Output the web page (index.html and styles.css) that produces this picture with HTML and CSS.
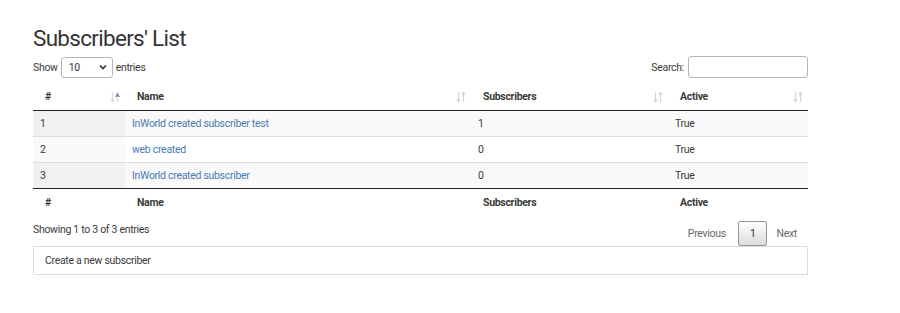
FILE: index.html
```html
<!DOCTYPE html>
<html>
<head>
<meta charset="utf-8">
<link rel="stylesheet" href="styles.css">
</head>
<body>
<div class="page">
  <h2 class="title">Subscribers' List</h2>
  <div class="controls">
    <label class="length">Show
      <span class="select"><span>10</span>
        <svg width="8" height="6" viewBox="0 0 8 6"><path d="M1 1.5 L4 4.5 L7 1.5" fill="none" stroke="#333" stroke-width="1.6"/></svg>
      </span>
      entries</label>
    <label class="search">Search: <span class="input"></span></label>
  </div>
  <table class="grid">
    <colgroup><col class="c1"><col class="c2"><col class="c3"><col class="c4"></colgroup>
    <thead>
      <tr>
        <th><span>#</span>
          <svg class="sort" width="10" height="12" viewBox="0 0 10 12"><path d="M2.5 1 V10.5 M0.8 8.5 L2.5 10.5 L4.2 8.5" fill="none" stroke="#d9d9d9" stroke-width="1.2"/><path d="M5 6 L7.5 1.2 L10 6 Z" fill="#8e86c6"/><path d="M7.5 5.5 V11" stroke="#d9d9d9" stroke-width="1.2"/></svg>
        </th>
        <th><span>Name</span>
          <svg class="sort" width="10" height="12" viewBox="0 0 10 12"><path d="M2.5 1 V10.5 M0.8 8.5 L2.5 10.5 L4.2 8.5 M7.5 11 V1.5 M5.8 3.5 L7.5 1.5 L9.2 3.5" fill="none" stroke="#d4d4d4" stroke-width="1.2"/></svg>
        </th>
        <th><span>Subscribers</span>
          <svg class="sort" width="10" height="12" viewBox="0 0 10 12"><path d="M2.5 1 V10.5 M0.8 8.5 L2.5 10.5 L4.2 8.5 M7.5 11 V1.5 M5.8 3.5 L7.5 1.5 L9.2 3.5" fill="none" stroke="#d4d4d4" stroke-width="1.2"/></svg>
        </th>
        <th><span>Active</span>
          <svg class="sort" width="10" height="12" viewBox="0 0 10 12"><path d="M2.5 1 V10.5 M0.8 8.5 L2.5 10.5 L4.2 8.5 M7.5 11 V1.5 M5.8 3.5 L7.5 1.5 L9.2 3.5" fill="none" stroke="#d4d4d4" stroke-width="1.2"/></svg>
        </th>
      </tr>
    </thead>
    <tbody>
      <tr class="odd"><td class="sorted">1</td><td><a href="#">InWorld created subscriber test</a></td><td>1</td><td>True</td></tr>
      <tr class="even"><td class="sorted">2</td><td><a href="#">web created</a></td><td>0</td><td>True</td></tr>
      <tr class="odd"><td class="sorted">3</td><td><a href="#">InWorld created subscriber</a></td><td>0</td><td>True</td></tr>
    </tbody>
    <tfoot>
      <tr><th>#</th><th>Name</th><th>Subscribers</th><th>Active</th></tr>
    </tfoot>
  </table>
  <div class="info-row">
    <div class="info">Showing 1 to 3 of 3 entries</div>
    <div class="pager">
      <span class="pbtn prev disabled">Previous</span>
      <span class="pbtn current">1</span>
      <span class="pbtn next disabled">Next</span>
    </div>
  </div>
  <div class="create">Create a new subscriber</div>
</div>
</body>
</html>
```
FILE: styles.css
```css
* { box-sizing: border-box; }
body {
  margin: 0;
  font-family: Roboto, "Liberation Sans", sans-serif;
  font-size: 10.5px;
  letter-spacing: -0.3px;
  color: #3a3a3a;
  background: #fff;
}
.page {
  width: 775px;
  margin-left: 33px;
  padding-top: 23px;
}
.title {
  margin: 0;
  font-size: 22.5px;
  letter-spacing: -0.7px;
  font-weight: 400;
  line-height: 30px;
  color: #333;
}
.controls {
  display: flex;
  justify-content: space-between;
  align-items: center;
  margin-top: 3px;
  height: 22px;
}
.length, .search {
  display: flex;
  align-items: center;
  gap: 3px;
}
.select {
  width: 52px;
  height: 21px;
  border: 1px solid #b5b5b5;
  border-radius: 3px;
  display: flex;
  align-items: center;
  justify-content: space-between;
  padding: 0 5px 0 7px;
}
.input {
  display: block;
  width: 120px;
  height: 22px;
  border: 1px solid #b5b5b5;
  border-radius: 3px;
  margin-left: 1px;
}
.grid {
  margin-top: 4px;
  width: 775px;
  border-collapse: collapse;
  table-layout: fixed;
}
.c1 { width: 92px; }
.c2 { width: 346px; }
.c3 { width: 197px; }
.c4 { width: 140px; }
.grid thead th {
  height: 28px;
  padding: 1px 0 0 12px;
  text-align: left;
  font-weight: 700;
  border-bottom: 1px solid #222;
  position: relative;
}
.sort {
  position: absolute;
  right: 5px;
  top: 9px;
}
.grid td {
  height: 26px;
  padding: 0 0 0 7px;
  border-top: 1px solid #ddd;
}
.grid tbody tr:first-child td { border-top: none; }
.odd td { background: #f9f9f9; }
.odd td.sorted { background: #f1f1f1; }
.even td { background: #fff; }
.even td.sorted { background: #fafafa; }
.grid a {
  color: #4a7bb0;
  text-decoration: none;
}
.grid tfoot th {
  height: 27px;
  padding: 1px 0 0 12px;
  text-align: left;
  font-weight: 700;
  border-top: 1px solid #222;
}
.info-row {
  display: flex;
  justify-content: space-between;
  align-items: flex-start;
  margin-top: 6px;
  height: 24px;
}
.info {
  line-height: 13px;
  margin-top: 2px;
}
.pager {
  display: flex;
  align-items: center;
}
.pbtn {
  line-height: 13px;
  padding: 5px 11px;
  color: #666;
  border: 1px solid transparent;
  border-radius: 2px;
}
.pbtn.next {
  padding: 5px 10px 5px 8px;
}
.pbtn.current {
  color: #333;
  border-color: #979797;
  background: linear-gradient(#fff, #dcdcdc);
}
.create {
  margin-top: 1px;
  height: 29px;
  border: 1px solid #ddd;
  display: flex;
  align-items: center;
  padding-left: 11px;
}
```
